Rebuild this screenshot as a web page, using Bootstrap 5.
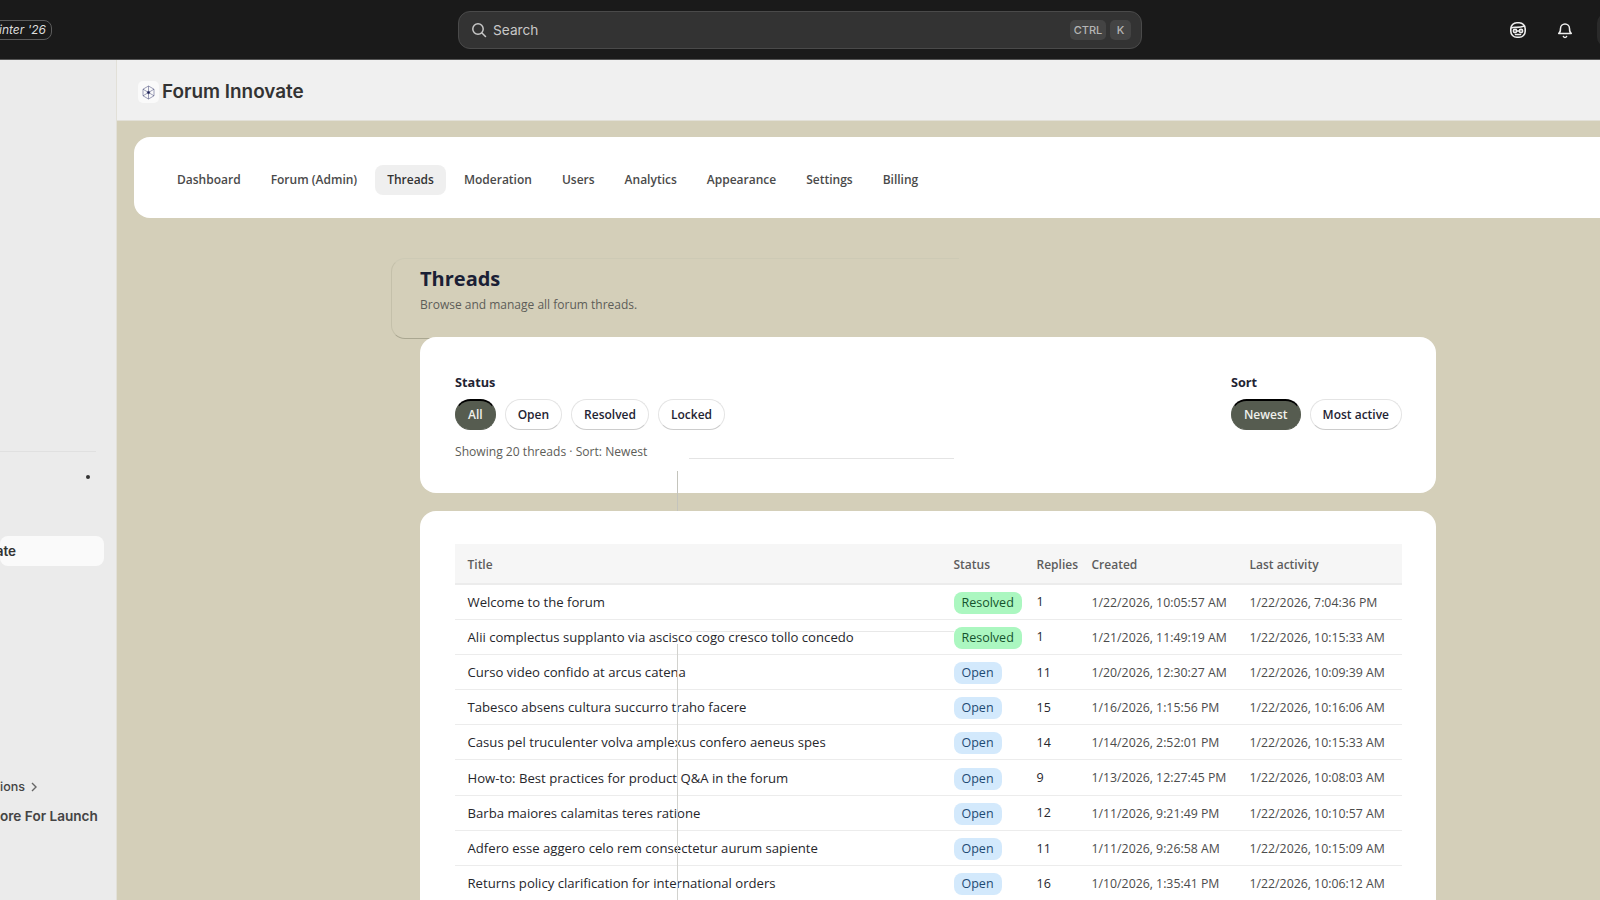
<!DOCTYPE html>
<html lang="en">
<head>
  <meta charset="UTF-8" />
  <title>Threads - Forum Innovate</title>
  <link rel="stylesheet" href="https://cdn.jsdelivr.net/npm/bootstrap@5.3.0/dist/css/bootstrap.min.css" />
  <style>
    html, body { height: 900px; overflow: hidden; }
    body { font-family: "Open Sans", sans-serif; background: #d4cfb9; color: #1f2433; position: relative; }
    .ui { font-family: Inter, sans-serif; }

    .topbar { height: 60px; background: #1a1a1a; border-bottom: 1px solid #555; display: grid; grid-template-columns: 458px 684px 1fr; align-items: center; overflow: hidden; }
    .season { width: 52px; display: flex; justify-content: flex-end; overflow: hidden; white-space: nowrap; }
    .season span { flex: none; border: 1px solid #5c5c5c; border-radius: 8px; height: 20px; line-height: 18px; padding: 0 5px; color: #ddd; font-size: 12px; font-style: italic; }
    .search { height: 38px; background: #333; border: 1px solid #4a4a4a; border-radius: 12px; padding: 0 10px 0 12px; color: #c8c8c8; font-size: 13.7px; }
    .search-label { margin-left: 6px; padding-top: 2px; }
    .search kbd { background: #444; color: #b5b5b5; font: 500 11px Inter, sans-serif; padding: 0; height: 20px; line-height: 20px; border-radius: 5px; text-align: center; box-shadow: none; }
    .kbd-ctrl { width: 36px; }
    .kbd-k { width: 21px; }
    .top-icons { color: #eee; padding-left: 367px; gap: 29px; }
    .avatar { width: 20px; height: 34px; margin-left: -6px; background: #4ade80; border: 4px solid #2a2a2a; border-right: 0; border-radius: 10px 0 0 10px; flex: none; }

    .shell { height: 840px; }
    .sidebar { width: 117px; flex: none; background: #ebebeb; color: #333; font-size: 13.5px; font-weight: 600; overflow: hidden; border-right: 1px solid #e2e0d8; }
    .side-rule { margin-top: 391px; width: 96px; height: 1px; background: #e0e0e0; }
    .side-dot { width: 4px; height: 4px; background: #333; border-radius: 50%; margin: 23px 0 0 86px; }
    .side-active { margin-top: 57px; width: 104px; height: 30px; background: #fafafa; border-radius: 8px; display: flex; align-items: center; justify-content: flex-end; overflow: hidden; white-space: nowrap; padding-right: 88px; }
    .side-active span { flex: none; }
    .side-more { margin-top: 211px; height: 20px; font-weight: 500; color: #444; font-size: 12.5px; gap: 5px; }
    .side-launch { margin-top: 9px; white-space: nowrap; font-size: 13.6px; color: #444; }

    .main { min-width: 0; overflow: hidden; }
    .page-head { height: 61px; background: #f0f0f0; border-bottom: 1px solid #e2e0d8; padding: 5px 0 0 21px; color: #333; font-size: 18.9px; font-weight: 600; gap: 3px; }
    .logo { width: 21px; height: 22px; background: #fafafa; border-radius: 5px; margin-top: -1px; }

    .tabs-card { margin: 16px 0 0 17px; height: 81px; background: #fff; border-radius: 16px 0 0 16px; padding: 4px 0 0 31px; }
    .tab { font-size: 12px; font-weight: 600; color: #4a4a4a; padding: 0 12px; height: 30px; line-height: 30px; margin-right: 6px; border-radius: 8px; text-decoration: none; }
    .tab.active { background: #efefef; color: #333; }

    .threads { width: 1016px; margin-left: 303px; }
    .threads h1 { font-size: 20px; font-weight: 700; margin: 47px 0 0; line-height: 28px; color: #1a2035; }
    .threads .lead-line { font-size: 12px; color: #5d5d58; margin: 3px 0 0; line-height: 18px; }
    .panel { background: #fff; border-radius: 16px; padding: 34px 34px 34px 35px; position: relative; z-index: 1; }
    .filters { margin-top: 23px; height: 156px; }
    .label-strong { font-size: 12.7px; font-weight: 700; line-height: 18px; margin-top: 2px; }
    .pill { font-size: 12px; font-weight: 600; height: 31px; line-height: 29px; padding: 0 12px; border: 1px solid #e4e4e4; border-bottom-color: #ccc; border-radius: 16px; background: #fff; color: #1f2433; }
    .pill.on { background: #565c50; color: #f0f0ec; border-color: #565c50; border-top: 2px solid #000; line-height: 27px; }
    .pills { gap: 9px; margin-top: 8px; }
    .showing { font-size: 12.1px; color: #5d5d58; margin-top: 13px; line-height: 18px; }

    .list-panel { margin-top: 18px; height: 389px; padding-top: 33px; border-radius: 16px 16px 0 0; overflow: hidden; }
    .table { font-size: 13.15px; margin: 0; table-layout: fixed; --bs-table-border-color: #ececec; color: #26262b; }
    .c-title { width: 486px; }
    .c-status { width: 83px; }
    .c-replies { width: 55px; }
    .c-created { width: 158px; }
    .table th { background: #f6f6f6; color: #5d5d5d; font-weight: 600; font-size: 12px; height: 40px; vertical-align: middle; padding: 3px 0 0 12.500px; border-bottom: 2px solid #ececec; }
    .table td { height: 35.2px; padding: 2px 0 0 12.500px; vertical-align: middle; white-space: nowrap; }
    .table td.stamp { font-size: 12.3px; color: #4c4c4c; }
    .table td.num { font-weight: 500; font-size: 12.5px; }
    .chip { display: inline-block; font-size: 12.5px; height: 22px; line-height: 22px; padding: 0 8px; border-radius: 8px; }
    .chip-resolved { background: #abf7c0; color: #14532d; }
    .chip-open { background: #d3e9fc; color: #1e4b73; }

    .ghost { position: absolute; pointer-events: none; }
    .ghost-frame { left: 391px; top: 258px; width: 568px; height: 81px; border: 1px solid #cdcab5; border-left-color: #c4c0aa; border-right: 0; border-bottom-color: #aaa791; border-radius: 14px 0 0 14px; }
    .ghost-h1 { left: 689px; top: 458px; width: 265px; height: 1px; background: #e4e4e4; z-index: 2; }
    .ghost-v1 { left: 677px; top: 471px; width: 1px; height: 40px; background: #c4c4bc; z-index: 2; }
    .ghost-h2 { left: 689px; top: 631px; width: 265px; height: 1px; background: #e8e8e8; z-index: 2; }
    .ghost-v2 { left: 677px; top: 644px; width: 1px; height: 256px; background: #d2d2ce; z-index: 2; }
  </style>
</head>
<body>
  <header class="topbar ui">
    <div class="season"><span>Winter '26</span></div>
    <div class="search d-flex align-items-center">
      <svg width="16" height="16" viewBox="0 0 16 16" fill="none" stroke="currentColor" stroke-width="1.5" stroke-linecap="round"><circle cx="7" cy="7" r="5.2"/><path d="M11 11l3.5 3.5"/></svg>
      <span class="search-label flex-grow-1">Search</span>
      <kbd class="kbd-ctrl">CTRL</kbd>
      <kbd class="kbd-k ms-1">K</kbd>
    </div>
    <div class="top-icons d-flex align-items-center">
      <svg width="18" height="18" viewBox="0 0 18 18" fill="none" stroke="currentColor" stroke-width="1.6" stroke-linecap="round"><rect x="1.800" y="1.800" width="14.400" height="14.400" rx="6"/><path d="M2.500 6.800C6 5.500 9 7.500 15.500 5"/><circle cx="6" cy="10" r="1.600"/><circle cx="12" cy="10" r="1.600"/><path d="M7.600 10h2.800M6.500 13.500h5"/></svg>
      <svg width="18" height="18" viewBox="0 0 18 18" fill="none" stroke="currentColor" stroke-width="1.5" stroke-linecap="round" stroke-linejoin="round"><path d="M4.500 7.500a4.500 4.500 0 0 1 9 0c0 4 1.800 5 1.800 5H2.700s1.800-1 1.800-5z"/><path d="M7.400 15.500a1.800 1.800 0 0 0 3.200 0"/></svg>
      <div class="avatar"></div>
    </div>
  </header>

  <div class="shell d-flex">
    <aside class="sidebar ui">
      <div class="side-rule"></div>
      <div class="side-dot"></div>
      <div class="side-active"><span>Forum Innovate</span></div>
      <div class="side-more d-flex align-items-center"><span>ions</span>
        <svg width="8" height="10" viewBox="0 0 8 10" fill="none" stroke="#666" stroke-width="1.4"><path d="M2 1l4 4-4 4"/></svg>
      </div>
      <div class="side-launch">ore For Launch</div>
    </aside>

    <main class="main flex-grow-1">
      <div class="page-head ui d-flex align-items-center">
        <div class="logo d-flex align-items-center justify-content-center">
          <svg width="15" height="15" viewBox="0 0 15 15" fill="none" stroke="#3b3f70" stroke-width=".5"><path d="M7.500 1l5.500 3.200v6.600L7.500 14 2 10.800V4.200z"/><path d="M7.500 1v13M2 4.200l11 6.600M13 4.200L2 10.800"/><circle cx="7.500" cy="7.500" r="1.200" fill="#1c1f52"/></svg>
        </div>
        <span>Forum Innovate</span>
      </div>

      <nav class="tabs-card d-flex align-items-center">
        <a class="tab" href="#">Dashboard</a>
        <a class="tab" href="#">Forum (Admin)</a>
        <a class="tab active" href="#">Threads</a>
        <a class="tab" href="#">Moderation</a>
        <a class="tab" href="#">Users</a>
        <a class="tab" href="#">Analytics</a>
        <a class="tab" href="#">Appearance</a>
        <a class="tab" href="#">Settings</a>
        <a class="tab" href="#">Billing</a>
      </nav>

      <section class="threads">
        <h1>Threads</h1>
        <p class="lead-line">Browse and manage all forum threads.</p>

        <div class="panel filters">
          <div class="d-flex justify-content-between">
            <div>
              <div class="label-strong">Status</div>
              <div class="pills d-flex">
                <span class="pill on">All</span>
                <span class="pill">Open</span>
                <span class="pill">Resolved</span>
                <span class="pill">Locked</span>
              </div>
              <div class="showing">Showing 20 threads · Sort: Newest</div>
            </div>
            <div>
              <div class="label-strong">Sort</div>
              <div class="pills d-flex">
                <span class="pill on">Newest</span>
                <span class="pill">Most active</span>
              </div>
            </div>
          </div>
        </div>

        <div class="panel list-panel">
          <table class="table">
            <colgroup><col class="c-title"><col class="c-status"><col class="c-replies"><col class="c-created"><col></colgroup>
            <thead>
              <tr><th>Title</th><th>Status</th><th>Replies</th><th>Created</th><th>Last activity</th></tr>
            </thead>
            <tbody>
              <tr><td>Welcome to the forum</td><td><span class="chip chip-resolved">Resolved</span></td><td class="num">1</td><td class="stamp">1/22/2026, 10:05:57 AM</td><td class="stamp">1/22/2026, 7:04:36 PM</td></tr>
              <tr><td>Alii complectus supplanto via ascisco cogo cresco tollo concedo</td><td><span class="chip chip-resolved">Resolved</span></td><td class="num">1</td><td class="stamp">1/21/2026, 11:49:19 AM</td><td class="stamp">1/22/2026, 10:15:33 AM</td></tr>
              <tr><td>Curso video confido at arcus catena</td><td><span class="chip chip-open">Open</span></td><td class="num">11</td><td class="stamp">1/20/2026, 12:30:27 AM</td><td class="stamp">1/22/2026, 10:09:39 AM</td></tr>
              <tr><td>Tabesco absens cultura succurro traho facere</td><td><span class="chip chip-open">Open</span></td><td class="num">15</td><td class="stamp">1/16/2026, 1:15:56 PM</td><td class="stamp">1/22/2026, 10:16:06 AM</td></tr>
              <tr><td>Casus pel truculenter volva amplexus confero aeneus spes</td><td><span class="chip chip-open">Open</span></td><td class="num">14</td><td class="stamp">1/14/2026, 2:52:01 PM</td><td class="stamp">1/22/2026, 10:15:33 AM</td></tr>
              <tr><td>How-to: Best practices for product Q&amp;A in the forum</td><td><span class="chip chip-open">Open</span></td><td class="num">9</td><td class="stamp">1/13/2026, 12:27:45 PM</td><td class="stamp">1/22/2026, 10:08:03 AM</td></tr>
              <tr><td>Barba maiores calamitas teres ratione</td><td><span class="chip chip-open">Open</span></td><td class="num">12</td><td class="stamp">1/11/2026, 9:21:49 PM</td><td class="stamp">1/22/2026, 10:10:57 AM</td></tr>
              <tr><td>Adfero esse aggero celo rem consectetur aurum sapiente</td><td><span class="chip chip-open">Open</span></td><td class="num">11</td><td class="stamp">1/11/2026, 9:26:58 AM</td><td class="stamp">1/22/2026, 10:15:09 AM</td></tr>
              <tr><td>Returns policy clarification for international orders</td><td><span class="chip chip-open">Open</span></td><td class="num">16</td><td class="stamp">1/10/2026, 1:35:41 PM</td><td class="stamp">1/22/2026, 10:06:12 AM</td></tr>
            </tbody>
          </table>
        </div>
      </section>
    </main>
  </div>

  <div class="ghost ghost-frame"></div>
  <div class="ghost ghost-h1"></div>
  <div class="ghost ghost-v1"></div>
  <div class="ghost ghost-h2"></div>
  <div class="ghost ghost-v2"></div>
  <script src="https://cdn.jsdelivr.net/npm/bootstrap@5.3.0/dist/js/bootstrap.bundle.min.js"></script>
</body>
</html>
